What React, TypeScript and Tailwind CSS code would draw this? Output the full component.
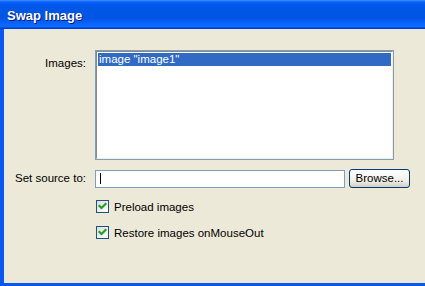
const options = ['Preload images', 'Restore images onMouseOut'];

function Check() {
  return (
    <span className="flex h-[13px] w-[13px] items-center justify-center border border-[#1c5180] bg-[linear-gradient(135deg,#dcdcd7,#ffffff)]">
      <svg width="11" height="11" viewBox="0 0 11 11">
        <path d="M2.5 5 L4.5 7 L8.5 3" fill="none" stroke="#21a121" strokeWidth="2.2" strokeLinecap="square" />
      </svg>
    </span>
  );
}

export default function App() {
  return (
    <div className="flex h-[286px] w-[425px] flex-col overflow-hidden font-['Liberation_Sans',Arial,sans-serif] text-[11.5px] text-black">
      <div className="flex h-[29px] items-center pl-[7px] pt-[3px] bg-[linear-gradient(to_bottom,#3d95ff_0px,#0a5fff_2px,#0058e6_6px,#0054e3_18px,#0a66ff_24px,#0b6cff_27px,#003dd3_28px)]">
        <span className="text-[13px] font-bold text-white [text-shadow:1px_1px_0_#0a1883]">Swap Image</span>
      </div>

      <div className="flex flex-1 flex-col border-b-[3px] border-l-4 border-[#0a58f0] bg-[#ece9d8] pt-[21px]">
        <div className="flex gap-[9px]">
          <div className="w-[82px] pt-[5px] text-right">Images:</div>
          <div className="h-[110px] w-[299px] border border-[#7f9db9] bg-white">
            <div className="h-full border border-b-[#f1efe2] border-l-[#8a8a8a] border-r-[#f1efe2] border-t-[#8a8a8a] p-px">
              <div className="flex h-[13px] items-center bg-[#316ac5] pl-px text-white">image "image1"</div>
            </div>
          </div>
        </div>

        <div className="mt-[9px] flex items-center gap-[9px]">
          <div className="w-[82px] text-right">Set source to:</div>
          <div className="flex items-center gap-[4px]">
            <div className="flex h-[18px] w-[250px] items-center border border-[#7f9db9] bg-white pl-[4px]">
              <span className="h-[11px] w-px bg-black" />
            </div>
            <button className="h-[19px] w-[61px] rounded-[3px] border border-[#003c74] bg-[linear-gradient(to_bottom,#ffffff,#f0f0ea_60%,#d6d0c5)] text-[11.5px]">
              Browse...
            </button>
          </div>
        </div>

        <div className="ml-[92px] mt-[12px] flex flex-col gap-[13px]">
          {options.map((label) => (
            <div key={label} className="flex h-[13px] items-center gap-[5px]">
              <Check />
              <span className="pt-[2px]">{label}</span>
            </div>
          ))}
        </div>
      </div>
    </div>
  );
}
